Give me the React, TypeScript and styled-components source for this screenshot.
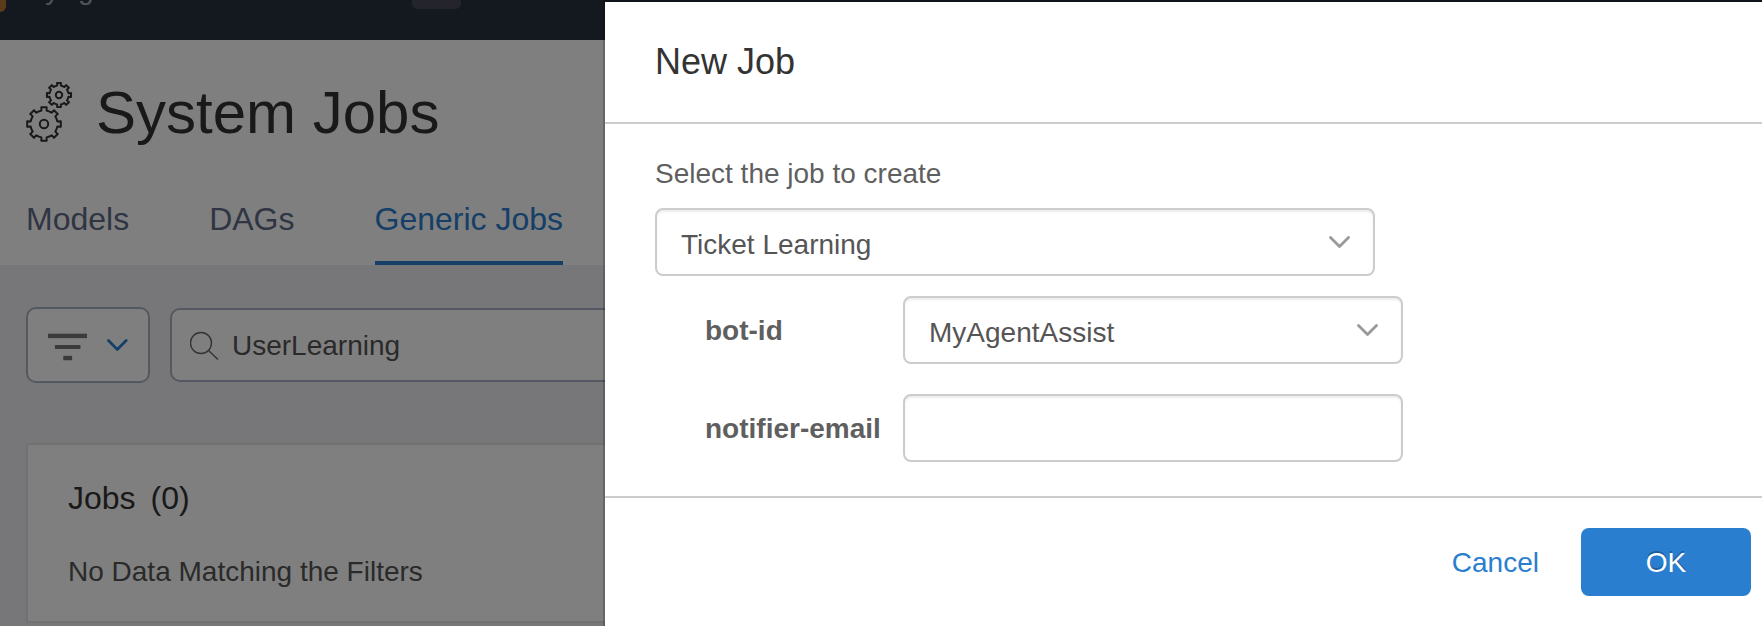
import React from "react";
import styled, { createGlobalStyle } from "styled-components";

const GlobalStyle = createGlobalStyle`
  *, *::before, *::after { box-sizing: border-box; }
  html, body { margin: 0; }
  body {
    overflow: hidden;
    background: #efeff3;
    color: #333;
    font-family: "Liberation Sans", Arial, sans-serif;
    font-size: 28px;
    line-height: 32px;
  }
  button, input, select { font: inherit; margin: 0; }
  h1, h2, p { margin: 0; font-weight: 400; }
`;

const Page = styled.div`
  min-height: 100vh;
`;

const TopBar = styled.header`
  display: flex;
  align-items: center;
  height: 72px;
  margin-top: -32px;
  padding-bottom: 14px;
  background: #283341;
  color: #a4a6b2;
`;

const BrandMark = styled.span`
  width: 6px;
  height: 30px;
  border-radius: 0 0 6px 0;
  background: #b87830;
`;

const BotName = styled.span`
  width: 406px;
  padding: 0 0 14px 16px;
`;

const Pill = styled.span`
  width: 49px;
  height: 24px;
  border-radius: 6px;
  background: #484b58;
`;

const PageHead = styled.section`
  padding: 0 26px;
  background: #fff;
`;

const TitleRow = styled.div`
  display: flex;
  align-items: center;
  gap: 22px;
  padding-top: 36px;
`;

const Title = styled.h1`
  font-size: 60px;
  line-height: 74px;
`;

const Tabs = styled.nav`
  display: flex;
  gap: 80px;
  padding-top: 44px;
`;

const Tab = styled.a<{ $active?: boolean }>`
  height: 71px;
  padding-top: 7px;
  border-bottom: 4px solid ${(p) => (p.$active ? "#2a7ecf" : "transparent")};
  color: ${(p) => (p.$active ? "#2a7ecf" : "#5f6b87")};
  font-size: 32px;
  line-height: 36px;
  text-decoration: none;
`;

const Toolbar = styled.div`
  display: flex;
  align-items: center;
  gap: 20px;
  padding: 42px 26px 60px;
`;

const FilterButton = styled.button`
  display: flex;
  align-items: center;
  gap: 19px;
  width: 124px;
  height: 76px;
  padding: 0 20px;
  border: 2px solid #a8b0c4;
  border-radius: 10px;
  background: #fff;
  color: #2a7ecf;
`;

const SearchBox = styled.label`
  display: flex;
  flex: 1;
  align-items: center;
  gap: 13px;
  height: 74px;
  padding: 0 18px;
  border: 2px solid #a8b0c4;
  border-radius: 10px;
  background: #fff;
`;

const SearchInput = styled.input`
  flex: 1;
  border: 0;
  outline: 0;
  padding: 2px 0 0;
  background: transparent;
  color: #555;
`;

const Card = styled.section`
  margin: 0 26px;
  padding: 35px 40px 0;
  border: 2px solid #e2e2e4;
  background: #fff;
`;

const CardTitle = styled.h2`
  font-size: 32px;
  line-height: 36px;
`;

const Count = styled.span`
  margin-left: 15px;
`;

const Empty = styled.p`
  padding: 40px 0 33px;
  color: #555;
`;

const Backdrop = styled.div`
  position: fixed;
  inset: 0;
  background: rgba(0, 0, 0, 0.5);
`;

const Dialog = styled.div`
  position: fixed;
  inset: 0 0 0 603px;
  border: solid rgba(0, 0, 0, 0.2);
  border-width: 2px 0 0 2px;
  background: #fff;
  background-clip: padding-box;
`;

const DialogHead = styled.div`
  padding: 40px 50px;
  border-bottom: 2px solid #ccc;
`;

const DialogTitle = styled.h2`
  font-size: 36px;
  line-height: 40px;
`;

const DialogBody = styled.form`
  padding: 34px 50px;
  color: #5f5f5f;
`;

const BodyLabel = styled.label`
  display: block;
  padding-bottom: 18px;
`;

const SelectWrap = styled.div<{ $width: number }>`
  display: grid;
  align-items: center;
  width: ${(p) => p.$width}px;

  > * { grid-area: 1 / 1; }
  > svg { justify-self: end; margin-right: 25px; pointer-events: none; }
`;

const control = `
  width: 100%;
  height: 68px;
  padding: 6px 24px 0;
  border: 2px solid #ccc;
  border-radius: 8px;
  outline: 0;
  background: #fff;
  box-shadow: inset 0 2px 2px rgba(0, 0, 0, 0.075);
  color: #555;
`;

const Select = styled.select`
  appearance: none;
  ${control}
`;

const TextInput = styled.input`
  ${control}
`;

const Fields = styled.div`
  display: flex;
  flex-direction: column;
  gap: 30px;
  padding: 20px 0 0 50px;
`;

const Field = styled.div`
  display: flex;
  align-items: center;
`;

const FieldLabel = styled.label`
  width: 198px;
  padding-top: 2px;
  font-weight: 700;
`;

const FieldControl = styled.div`
  width: 500px;
`;

const DialogFoot = styled.div`
  display: flex;
  justify-content: flex-end;
  gap: 22px;
  padding: 30px 11px;
  border-top: 2px solid #ccc;
`;

const Button = styled.button<{ $primary?: boolean }>`
  width: ${(p) => (p.$primary ? "170px" : "auto")};
  height: 68px;
  padding: 2px 20px 0;
  border: 0;
  border-radius: 8px;
  background: ${(p) => (p.$primary ? "#2a7ecf" : "transparent")};
  color: ${(p) => (p.$primary ? "#fff" : "#2a7ecf")};
  text-shadow: ${(p) => (p.$primary ? "0 -2px 0 rgba(0, 0, 0, 0.25)" : "none")};
`;

/* Outline of a gear: alternating tooth tops and valleys around a centre. */
function gearPath(cx: number, cy: number, outer: number, inner: number) {
  const points: string[] = [];
  const at = (r: number, deg: number) => {
    const a = (deg * Math.PI) / 180;
    points.push(`${(cx + r * Math.cos(a)).toFixed(2)},${(cy + r * Math.sin(a)).toFixed(2)}`);
  };
  for (let i = 0; i < 8; i++) {
    const d = i * 45;
    at(inner, d - 11);
    at(outer, d - 9);
    at(outer, d + 9);
    at(inner, d + 11);
    at(inner, d + 22);
  }
  return `M${points.join("L")}Z`;
}

const GearsIcon = () => (
  <svg width="48" height="62" viewBox="0 0 48 62" fill="none" stroke="#333" strokeWidth="2" strokeLinejoin="round" aria-hidden="true">
    <path d={gearPath(33, 13, 12.2, 9.6)} />
    <circle cx="33" cy="13" r="3.2" />
    <path d={gearPath(18, 42, 17, 13.6)} />
    <circle cx="18" cy="42" r="4.2" />
  </svg>
);

const FilterIcon = () => (
  <svg width="40" height="34" viewBox="0 0 40 34" fill="#777" aria-hidden="true">
    <rect x="0" y="5.500" width="40" height="4.500" />
    <rect x="7" y="17" width="26" height="4" />
    <rect x="15.500" y="28" width="9" height="4.500" />
  </svg>
);

const SearchIcon = () => (
  <svg width="29" height="30" viewBox="0 0 29 30" fill="none" stroke="#666" strokeWidth="1.4" aria-hidden="true">
    <circle cx="11" cy="13" r="10.500" />
    <path d="M18.500 20.500L28 29.500" />
  </svg>
);

const Chevron = ({ color = "#999" }: { color?: string }) => (
  <svg width="22" height="14" viewBox="0 0 22 14" fill="none" stroke={color} strokeWidth="2.800" strokeLinecap="round" strokeLinejoin="round" aria-hidden="true">
    <path d="M2.500 2.500L11.500 11.500L20.500 2.500" />
  </svg>
);

export default function App() {
  return (
    <>
      <GlobalStyle />
      <Page>
        <TopBar>
          <BrandMark />
          <BotName>MyAgentAssist</BotName>
          <Pill />
        </TopBar>
        <PageHead>
          <TitleRow>
            <GearsIcon />
            <Title>System Jobs</Title>
          </TitleRow>
          <Tabs>
            <Tab href="#models">Models</Tab>
            <Tab href="#dags">DAGs</Tab>
            <Tab href="#generic" $active>Generic Jobs</Tab>
          </Tabs>
        </PageHead>
        <Toolbar>
          <FilterButton type="button" aria-label="Filter">
            <FilterIcon />
            <Chevron color="#2a7ecf" />
          </FilterButton>
          <SearchBox>
            <SearchIcon />
            <SearchInput aria-label="Search jobs" defaultValue="UserLearning" />
          </SearchBox>
        </Toolbar>
        <Card>
          <CardTitle>Jobs<Count>(0)</Count></CardTitle>
          <Empty>No Data Matching the Filters</Empty>
        </Card>
      </Page>
      <Backdrop />
      <Dialog role="dialog" aria-modal="true" aria-labelledby="dialog-title">
        <DialogHead>
          <DialogTitle id="dialog-title">New Job</DialogTitle>
        </DialogHead>
        <DialogBody id="job-form">
          <BodyLabel htmlFor="job">Select the job to create</BodyLabel>
          <SelectWrap $width={720}>
            <Select id="job">
              <option>Ticket Learning</option>
            </Select>
            <Chevron />
          </SelectWrap>
          <Fields>
            <Field>
              <FieldLabel htmlFor="bot">bot-id</FieldLabel>
              <SelectWrap $width={500}>
                <Select id="bot">
                  <option>MyAgentAssist</option>
                </Select>
                <Chevron />
              </SelectWrap>
            </Field>
            <Field>
              <FieldLabel htmlFor="email">notifier-email</FieldLabel>
              <FieldControl>
                <TextInput id="email" type="email" />
              </FieldControl>
            </Field>
          </Fields>
        </DialogBody>
        <DialogFoot>
          <Button type="button">Cancel</Button>
          <Button type="submit" form="job-form" $primary>OK</Button>
        </DialogFoot>
      </Dialog>
    </>
  );
}
